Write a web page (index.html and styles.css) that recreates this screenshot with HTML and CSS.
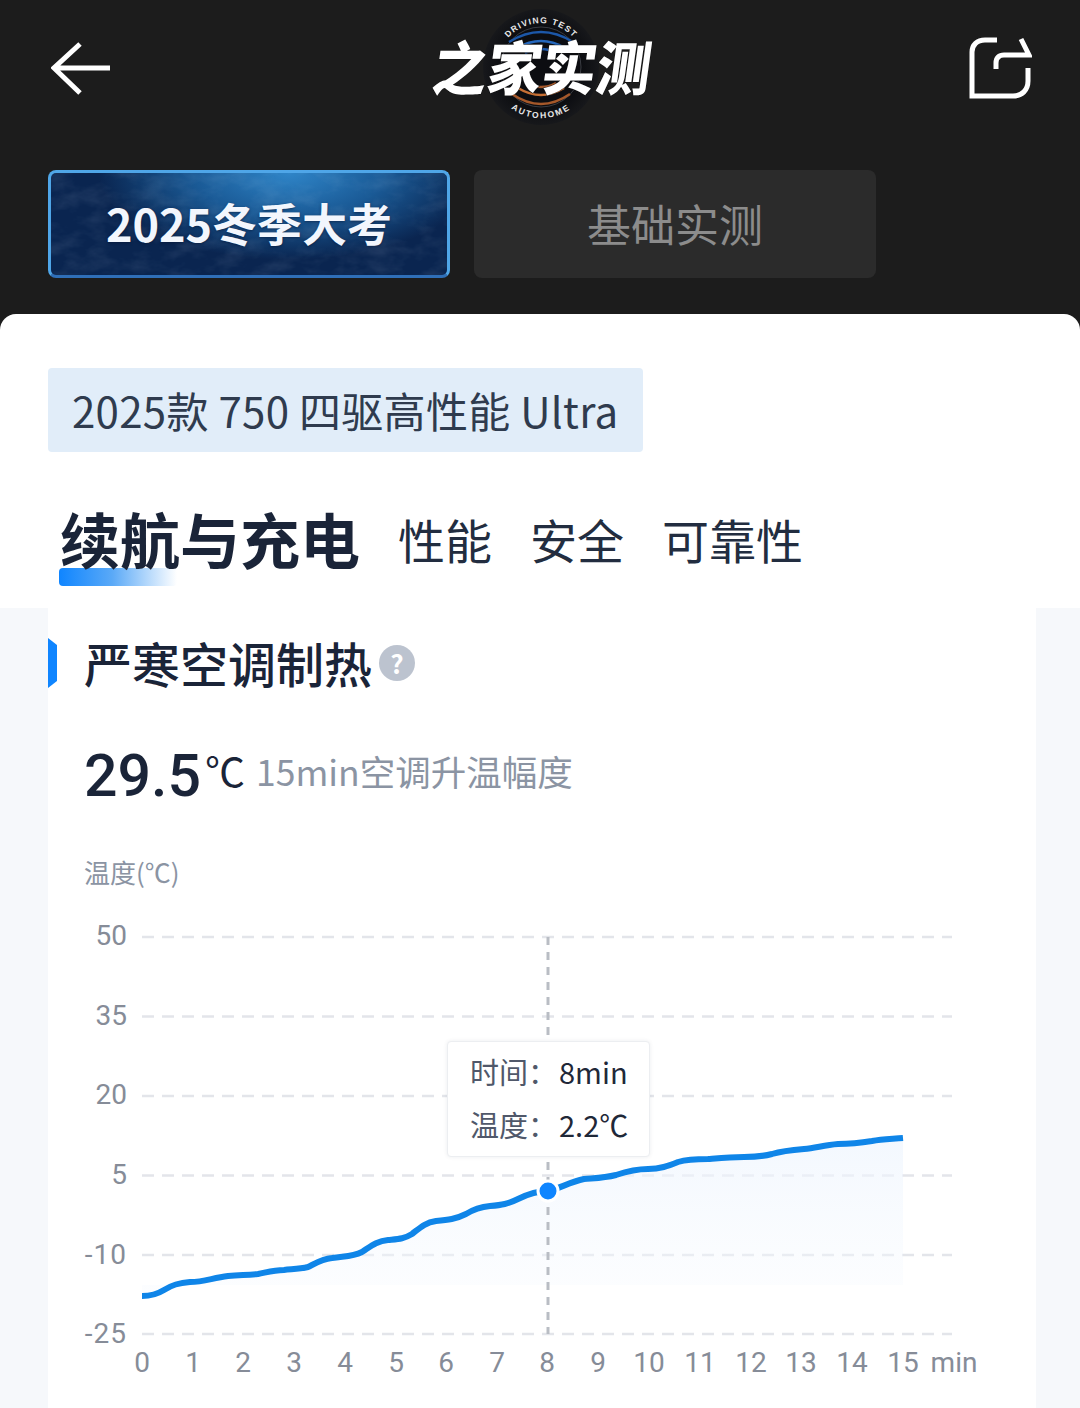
FILE: index.html
```html
<!DOCTYPE html>
<html lang="zh-CN">
  <head>
    <meta charset="UTF-8" />
    <meta name="viewport" content="width=device-width, initial-scale=1.0" />
    <title>之家实测</title>
    <link rel="stylesheet" href="styles.css">
  </head>
  <body>
    <header class="topbar">
      <svg class="back-icon" width="60" height="54" viewBox="0 0 60 54">
        <path d="M59 26H3M29 2 3 26l26 25" />
      </svg>
      <svg class="logo" width="260" height="120" viewBox="0 0 260 120">
        <defs>
          <path id="logo-top" d="M83 39A44 44 0 0 1 159 39" />
          <path id="logo-bottom" d="M77 87A51 51 0 0 0 165 87" />
          <radialGradient id="logo-disc">
            <stop offset="0.7" stop-color="#0c0d11" />
            <stop offset="1" stop-color="#17181b" />
          </radialGradient>
        </defs>
        <circle cx="121" cy="61" r="58" fill="url(#logo-disc)" />
        <circle cx="121" cy="61" r="40" fill="none" stroke="#3a3c42" stroke-width="1" />
        <g fill="none" stroke-width="2.5">
          <path d="M89 36q32-20 64 0" stroke="#1c57a8" />
          <path d="M97 42q24-14 48 0" stroke="#2467bd" />
          <path d="M105 47q16-8 32 0" stroke="#1c57a8" />
          <path d="M92 88q29 20 58 0" stroke="#a5582a" />
          <path d="M98 82q23 14 46 0" stroke="#c66f34" />
          <path d="M106 77q15 8 30 0" stroke="#a5582a" />
        </g>
        <text class="logo-small logo-small-top"><textPath href="#logo-top" startOffset="50%">DRIVING TEST</textPath></text>
        <text class="logo-small"><textPath href="#logo-bottom" startOffset="50%">AUTOHOME</textPath></text>
        <text class="logo-main" x="22" y="84" textLength="218" lengthAdjust="spacingAndGlyphs" transform="skewX(-8)">之家实测</text>
      </svg>
      <svg class="share-icon" width="64" height="64" viewBox="0 0 64 64">
        <path d="M29 4H17C9 4 4 9 4 16v44h41c9 0 15-6 15-15V32" />
        <path d="M53 3l8 16H36c-5 0-8 3-8 8v6" />
      </svg>
    </header>

    <nav class="tabs">
      <div class="tab tab-active">
        <svg class="frost" width="396" height="102">
          <defs>
            <filter id="frost-noise">
              <feTurbulence type="fractalNoise" baseFrequency="0.035 0.06" numOctaves="4" seed="11" />
              <feColorMatrix values="0 0 0 0 0.7  0 0 0 0 0.85  0 0 0 0 1  1.8 0 0 0 -0.7" />
            </filter>
          </defs>
          <rect width="396" height="102" filter="url(#frost-noise)" />
        </svg>
        <span class="tab-label">2025冬季大考</span>
      </div>
      <div class="tab"><span class="tab-label">基础实测</span></div>
    </nav>

    <main class="sheet">
      <div class="sheet-head">
        <div class="model-tag">2025款 750 四驱高性能 Ultra</div>
        <div class="cats">
          <div class="cat cat-active">续航与充电</div>
          <div class="cat">性能</div>
          <div class="cat">安全</div>
          <div class="cat">可靠性</div>
        </div>
      </div>

      <div class="content">
        <section class="panel">
          <h2 class="panel-title">
            <span>严寒空调制热</span>
            <i class="help">?</i>
          </h2>
          <div class="stat">
            <span class="stat-num">29.5</span>
            <span class="stat-unit">℃</span>
            <span class="stat-desc">15min空调升温幅度</span>
          </div>
          <div class="y-title">温度(℃)</div>
          <div class="chart">
            <svg width="988" height="520" viewBox="48 890 988 520">
              <defs>
                <linearGradient id="area-fill" x1="0" y1="0" x2="0" y2="1">
                  <stop offset="0" stop-color="#eef5fe" stop-opacity="0.7" />
                  <stop offset="1" stop-color="#f5f9fe" stop-opacity="0.3" />
                </linearGradient>
              </defs>
              <g class="grid">
                <path d="M142 937H952" />
                <path d="M142 1016.5H952" />
                <path d="M142 1096H952" />
                <path d="M142 1175.5H952" />
                <path d="M142 1255H952" />
                <path d="M142 1334H952" />
              </g>
              <path class="area" d="M142 1296C150 1296 156 1295 164 1290C172 1285 178 1283 190 1282C204 1282 212 1278 228 1276C240 1275 246 1275 258 1274C268 1272 274 1270 284 1270C294 1269 300 1269 308 1267C316 1263 322 1259 332 1258C344 1256 352 1257 362 1252C370 1247 376 1241 388 1240C398 1239 404 1239 412 1234C420 1228 424 1223 436 1221C448 1220 456 1219 466 1214C474 1209 480 1207 490 1206C502 1205 508 1204 518 1199C528 1194 536 1191 548 1191C558 1189 570 1182 584 1179C596 1178 604 1178 616 1175C628 1171 636 1169 648 1169C660 1169 668 1166 678 1162C688 1159 696 1159 708 1159C720 1158 730 1157 744 1157C756 1157 764 1156 772 1154C782 1151 792 1150 804 1149C816 1148 824 1145 838 1144C850 1144 860 1143 872 1141C882 1139 892 1139 903 1138V1285H142Z" />
              <path class="cursor" d="M548 937V1334" />
              <path class="line" d="M142 1296C150 1296 156 1295 164 1290C172 1285 178 1283 190 1282C204 1282 212 1278 228 1276C240 1275 246 1275 258 1274C268 1272 274 1270 284 1270C294 1269 300 1269 308 1267C316 1263 322 1259 332 1258C344 1256 352 1257 362 1252C370 1247 376 1241 388 1240C398 1239 404 1239 412 1234C420 1228 424 1223 436 1221C448 1220 456 1219 466 1214C474 1209 480 1207 490 1206C502 1205 508 1204 518 1199C528 1194 536 1191 548 1191C558 1189 570 1182 584 1179C596 1178 604 1178 616 1175C628 1171 636 1169 648 1169C660 1169 668 1166 678 1162C688 1159 696 1159 708 1159C720 1158 730 1157 744 1157C756 1157 764 1156 772 1154C782 1151 792 1150 804 1149C816 1148 824 1145 838 1144C850 1144 860 1143 872 1141C882 1139 892 1139 903 1138" />
              <circle class="dot" cx="548" cy="1191" r="10" />
              <g class="y-labels">
                <text x="127" y="945">50</text>
                <text x="127" y="1025">35</text>
                <text x="127" y="1104">20</text>
                <text x="127" y="1184">5</text>
                <text class="neg" x="127" y="1264">-10</text>
                <text class="neg" x="127" y="1343">-25</text>
              </g>
              <g class="x-labels">
                <text x="142" y="1372">0</text>
                <text x="193" y="1372">1</text>
                <text x="243" y="1372">2</text>
                <text x="294" y="1372">3</text>
                <text x="345" y="1372">4</text>
                <text x="396" y="1372">5</text>
                <text x="446" y="1372">6</text>
                <text x="497" y="1372">7</text>
                <text x="547" y="1372">8</text>
                <text x="598" y="1372">9</text>
                <text x="649" y="1372">10</text>
                <text x="700" y="1372">11</text>
                <text x="751" y="1372">12</text>
                <text x="801" y="1372">13</text>
                <text x="852" y="1372">14</text>
                <text x="903" y="1372">15</text>
                <text x="954" y="1372">min</text>
              </g>
            </svg>
            <div class="tooltip">
              <div class="tooltip-row"><span class="tooltip-key">时间：</span><span>8min</span></div>
              <div class="tooltip-row"><span class="tooltip-key">温度：</span><span>2.2℃</span></div>
            </div>
          </div>
        </section>
      </div>
    </main>
  </body>
</html>
```

FILE: styles.css
```css
* {
  box-sizing: border-box;
}

html,
body {
  margin: 0;
  height: 1408px;
  overflow: hidden;
}

body {
  background-color: #1c1c1c;
  font-family: "Noto Sans CJK SC", "Noto Sans", sans-serif;
  color: #1a2438;
}

.topbar {
  height: 134px;
  padding: 38px 48px 0 49px;
  position: relative;
  display: flex;
  justify-content: space-between;
  align-items: flex-start;
}

.back-icon {
  margin: 4px 0 0 2px;
}

.back-icon path,
.share-icon path {
  fill: none;
  stroke: white;
  stroke-width: 5;
}

.share-icon {
  margin-top: -2px;
}

.logo {
  position: absolute;
  left: 420px;
  top: 6px;
}

.logo-small {
  font-family: "Liberation Sans", sans-serif;
  font-size: 8.5px;
  font-weight: bold;
  letter-spacing: 1.8px;
  text-anchor: middle;
  fill: #e8e8e8;
}

.logo-small-top {
  letter-spacing: 1.2px;
}

.logo-main {
  font-size: 58px;
  font-weight: 900;
  fill: white;
  stroke: #101010;
  stroke-width: 1px;
  paint-order: stroke;
}

.tabs {
  padding: 36px 48px;
  display: flex;
  gap: 24px;
}

.tab {
  width: 402px;
  height: 108px;
  padding-bottom: 3px;
  border-radius: 8px;
  background-color: #2b2b2b;
  color: #8c8c8c;
  font-size: 44px;
  display: flex;
  align-items: center;
  justify-content: center;
}

.tab-active {
  position: relative;
  overflow: hidden;
  padding-bottom: 4px;
  border: 3px solid #4fa6e8;
  border-bottom-color: #2f6fb8;
  background: radial-gradient(ellipse 48% 85% at 60% 0, #2f85c8 0%, #1a5a96 50%, rgba(12, 40, 84, 0) 100%), #0a2550;
  color: #f2f6fd;
  font-weight: 700;
  font-size: 45px;
}

.frost {
  position: absolute;
  left: 0;
  top: 0;
  opacity: 0.1;
}

.tab-label {
  position: relative;
}

.tab-active .tab-label {
  text-shadow: 0 1px 3px rgba(5, 20, 50, 0.6);
}

.sheet {
  background-color: white;
  border-radius: 16px 16px 0 0;
}

.sheet-head {
  padding: 54px 48px 0 48px;
  height: 294px;
}

.model-tag {
  display: inline-block;
  height: 84px;
  line-height: 84px;
  padding: 0 24px;
  border-radius: 4px;
  background-color: #e1edf9;
  color: #2f3b4e;
  font-size: 42px;
  letter-spacing: 0.3px;
  white-space: nowrap;
}

.cats {
  margin-top: 44px;
  padding-left: 12px;
  display: flex;
  align-items: center;
  gap: 38px;
  height: 84px;
}

.cat {
  font-size: 47px;
  color: #222d40;
}

.cat-active {
  position: relative;
  isolation: isolate;
  font-size: 60px;
  font-weight: 700;
  line-height: 84px;
  color: #1a2438;
}

.cat-active::after {
  content: "";
  position: absolute;
  z-index: -1;
  left: -1px;
  bottom: -6px;
  width: 118px;
  height: 18px;
  border-radius: 4px;
  background: linear-gradient(90deg, #0f85ff 0%, #5aa9f7 45%, rgba(255, 255, 255, 0) 100%);
}

.content {
  background-color: #f6f8fb;
  padding: 0 44px 0 48px;
  height: 800px;
}

.panel {
  background-color: white;
  height: 800px;
  position: relative;
}

.panel-title {
  margin: 0;
  padding: 29px 0 0 36px;
  height: 130px;
  display: flex;
  align-items: flex-start;
  font-size: 48px;
  font-weight: 500;
  line-height: 50px;
  color: #1a2438;
}

.panel-title::before {
  content: "";
  position: absolute;
  left: 0;
  top: 30px;
  width: 9px;
  height: 50px;
  background-color: #0f85ff;
  clip-path: polygon(0 0, 100% 14%, 100% 86%, 0 100%);
}

.help {
  margin: 8px 0 0 7px;
  width: 36px;
  height: 36px;
  border-radius: 50%;
  background-color: #bcc3cf;
  color: white;
  font-size: 26px;
  font-style: normal;
  font-weight: 700;
  line-height: 36px;
  text-align: center;
}

.stat {
  padding-left: 36px;
  height: 74px;
  display: flex;
  align-items: center;
  white-space: nowrap;
}

.stat-num {
  font-family: "Roboto", sans-serif;
  font-size: 59px;
  font-weight: 500;
  margin-right: 4px;
  color: #1a2438;
}

.stat-unit {
  font-size: 40px;
  margin-bottom: 10px;
  color: #1a2438;
}

.stat-desc {
  font-size: 35.5px;
  margin: 0 0 10px 11px;
  color: #8b94a3;
}

.y-title {
  padding-left: 36px;
  font-size: 26px;
  line-height: 36px;
  margin-top: 42px;
  color: #8b94a3;
}

.chart {
  position: absolute;
  left: 0;
  top: 282px;
  width: 988px;
  height: 520px;
}

.chart svg {
  display: block;
}

.grid path {
  fill: none;
  stroke: #e3e5ea;
  stroke-width: 2.5;
  stroke-dasharray: 12 8;
}

.area {
  fill: url(#area-fill);
}

.cursor {
  fill: none;
  stroke: #b9bdc4;
  stroke-width: 3;
  stroke-dasharray: 8 7;
}

.line {
  fill: none;
  stroke: #0f85e8;
  stroke-width: 6;
}

.dot {
  fill: #0f85ff;
  stroke: white;
  stroke-width: 3;
}

.y-labels text,
.x-labels text {
  font-family: "Roboto", sans-serif;
  font-size: 28px;
  fill: #868c98;
}

.y-labels text {
  text-anchor: end;
}

.y-labels .neg {
  letter-spacing: 1px;
}

.x-labels text {
  text-anchor: middle;
}

.tooltip {
  position: absolute;
  left: 399px;
  top: 151px;
  width: 203px;
  height: 116px;
  padding: 3px 0 0 22px;
  background-color: white;
  border: 1px solid #eceef1;
  border-radius: 4px;
  box-shadow: 0 0 4px rgba(30, 40, 60, 0.08);
  font-size: 29px;
  color: #1f2838;
}

.tooltip-row {
  height: 53px;
  line-height: 53px;
  display: flex;
  white-space: nowrap;
}

.tooltip-key {
  width: 89px;
  color: #50586a;
}
```
